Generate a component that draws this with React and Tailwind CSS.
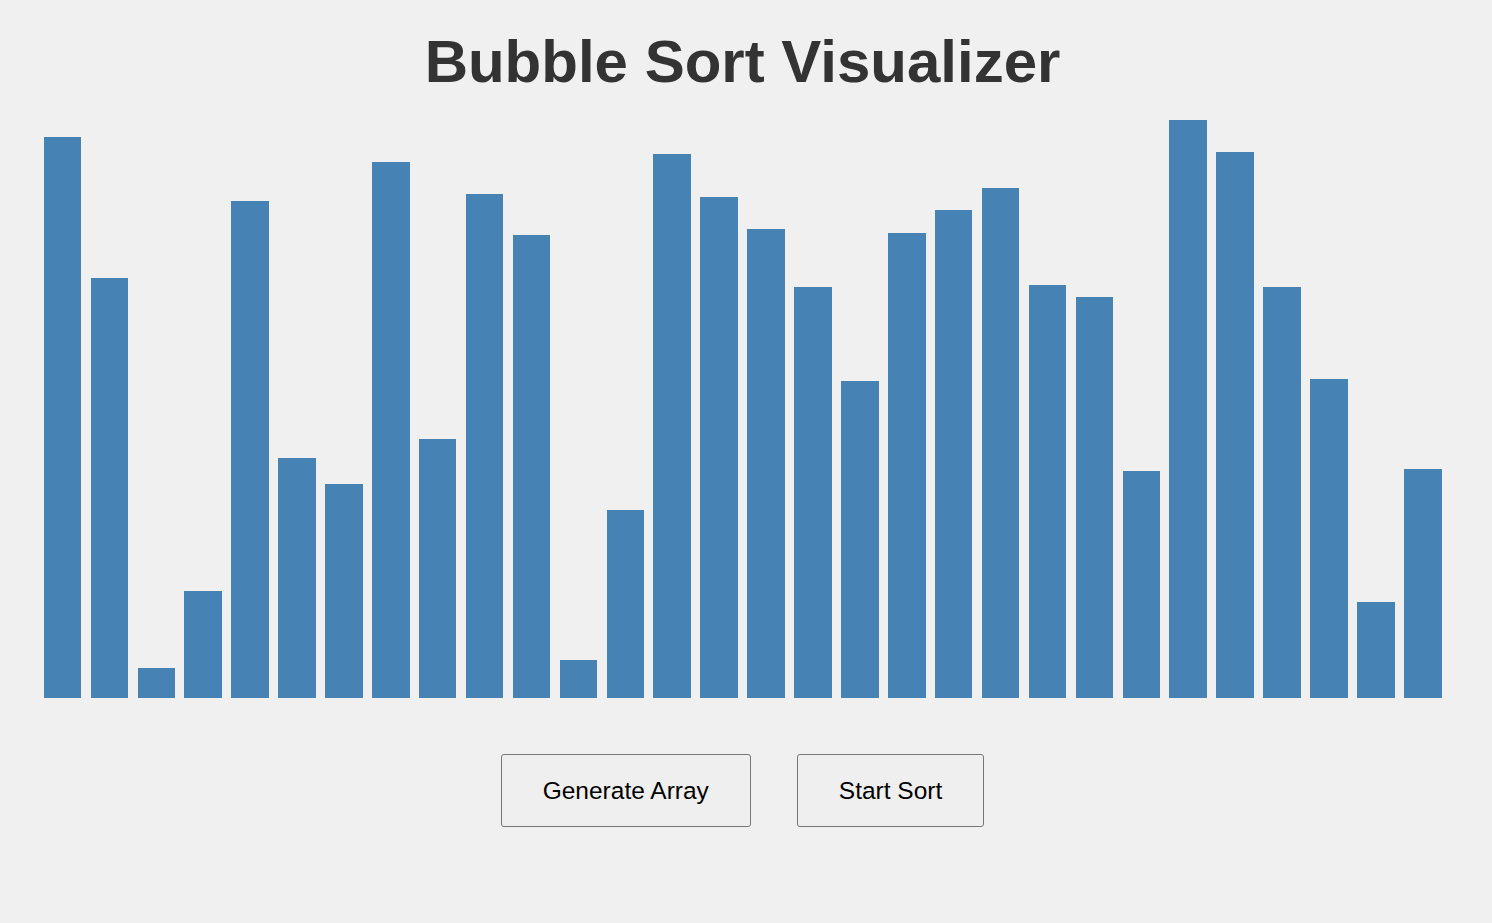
import React, { useState } from 'react';

const initialTops = [
    137, 278, 668, 591, 201, 458, 484, 162, 439, 194,
    235, 660, 510, 154, 197, 229, 287, 381, 233, 210,
    188, 285, 297, 471, 120, 152, 287, 379, 602, 469,
];

// bar heights in px, measured from the chart floor
const initialBars = initialTops.map(top => 698 - top);

const App = () => {
    const [bars, setBars] = useState(initialBars);

    const generateArray = () => {
        setBars(Array.from({ length: 30 }, () => Math.floor(Math.random() * 570) + 10));
    };

    return (
        <div className="min-h-screen w-full bg-[#f0f0f0] font-['Liberation_Sans',Arial,sans-serif]">
            <div className="w-[1485px] flex flex-col items-center">
                <h1 className="mt-[27px] text-[60px] leading-[69px] font-bold text-[#333333]">
                    Bubble Sort Visualizer
                </h1>

                <div className="w-full h-[602px] px-[39px] flex items-end">
                    {bars.map((h, i) => (
                        <div
                            key={i}
                            className="flex-1 mx-[4.7px] bg-[#4682b4]"
                            style={{ height: `${h}px` }}
                        />
                    ))}
                </div>

                <div className="mt-[56px] flex items-center gap-[46px]">
                    <button
                        onClick={generateArray}
                        className="px-[41px] py-[21px] text-[24.5px] leading-[29px] text-black bg-[#efefef] border border-[#767676] rounded-[3px]"
                    >
                        Generate Array
                    </button>
                    <button className="px-[41px] py-[21px] text-[24.5px] leading-[29px] text-black bg-[#efefef] border border-[#767676] rounded-[3px]">
                        Start Sort
                    </button>
                </div>
            </div>
        </div>
    );
};

export default App;
